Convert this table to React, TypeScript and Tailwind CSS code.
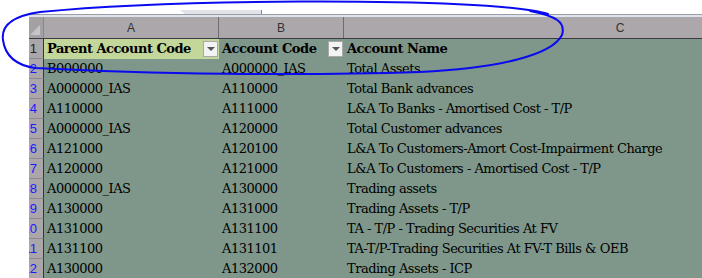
const rows = [
  ["B000000", "A000000_IAS", "Total Assets"],
  ["A000000_IAS", "A110000", "Total Bank advances"],
  ["A110000", "A111000", "L&A To Banks - Amortised Cost - T/P"],
  ["A000000_IAS", "A120000", "Total Customer advances"],
  ["A121000", "A120100", "L&A To Customers-Amort Cost-Impairment Charge"],
  ["A120000", "A121000", "L&A To Customers - Amortised Cost - T/P"],
  ["A000000_IAS", "A130000", "Trading assets"],
  ["A130000", "A131000", "Trading Assets - T/P"],
  ["A131000", "A131100", "TA - T/P - Trading Securities At FV"],
  ["A131100", "A131101", "TA-T/P-Trading Securities At FV-T Bills & OEB"],
  ["A130000", "A132000", "Trading Assets - ICP"],
];

const serif = "font-['DejaVu_Serif',serif] text-[13px] tracking-[-0.5px] text-black";

function FilterButton() {
  return (
    <div className="mr-px flex h-[16px] w-[15px] shrink-0 items-center justify-center border border-[#a9a9a9] bg-[#f3f3f3]">
      <div className="h-0 w-0 border-x-[4px] border-t-[4px] border-x-transparent border-t-[#555]" />
    </div>
  );
}

function RowHeader({ n, blue }: { n: number; blue?: boolean }) {
  return (
    <div
      className={`flex h-[20px] w-[15px] shrink-0 items-center justify-end overflow-hidden border-b border-r border-b-[#8d8a8d] border-r-[#33334d] bg-[#aaa6a9] pr-[6px] font-['Liberation_Sans',sans-serif] text-[13px] ${
        blue ? "text-[#1a1aff]" : "text-[#222]"
      }`}
    >
      <span className="whitespace-nowrap">{n}</span>
    </div>
  );
}

export default function App() {
  return (
    <div className="relative h-[278px] w-[702px] overflow-hidden bg-white">
      <div className="h-[14px] pt-[10px]">
        <div className="ml-[180px] h-[4px] w-[82px] border-r border-[#8a8a8a] bg-[#e2e3e9] [clip-path:polygon(0_0,100%_0,100%_100%,6%_100%)]" />
      </div>
      <div className="ml-[29px] w-[900px]">
        <div className="h-px bg-[#9c9ca4]" />
        <div className="h-[2px] bg-[#dfe3ee]" />
        {/* column headers */}
        <div className="flex h-[22px] border-b border-[#3b3b45] bg-[#aba7aa] font-['Liberation_Sans',sans-serif] text-[12px] text-[#333]">
          <div className="relative h-full w-[15px] shrink-0 border-r border-[#8a878a] bg-[#a4a1a4]">
            <div className="absolute bottom-[3px] right-[3px] h-0 w-0 border-b-[10px] border-l-[10px] border-b-[#c6c4c6] border-l-transparent" />
          </div>
          <div className="flex w-[175px] shrink-0 items-center justify-center border-r border-[#6e6c6e]">A</div>
          <div className="flex w-[125px] shrink-0 items-center justify-center border-r border-[#6e6c6e]">B</div>
          <div className="flex w-[552px] shrink-0 items-center justify-center">C</div>
        </div>
        {/* header row */}
        <div className="flex h-[20px]">
          <RowHeader n={1} />
          <div className="flex w-[175px] shrink-0 items-center justify-between bg-[#c4d79b] pl-[3px]">
            <span className={`${serif} font-bold`}>Parent Account Code</span>
            <FilterButton />
          </div>
          <div className="flex w-[125px] shrink-0 items-center justify-between bg-[#7f978a] pl-[3px]">
            <span className={`${serif} font-bold`}>Account Code</span>
            <FilterButton />
          </div>
          <div className="flex w-[552px] shrink-0 items-center bg-[#7f978a] pl-[3px]">
            <span className={`${serif} font-bold`}>Account Name</span>
          </div>
        </div>
        {rows.map((r, i) => (
          <div key={i} className="flex h-[20px]">
            <RowHeader n={i + 2} blue />
            <div className={`flex w-[175px] shrink-0 items-center bg-[#7f978a] pl-[3px] ${serif}`}>{r[0]}</div>
            <div className={`flex w-[125px] shrink-0 items-center bg-[#7f978a] pl-[3px] ${serif}`}>{r[1]}</div>
            <div className={`flex w-[552px] shrink-0 items-center whitespace-nowrap bg-[#7f978a] pl-[3px] ${serif}`}>{r[2]}</div>
          </div>
        ))}
      </div>
      <svg className="pointer-events-none absolute inset-0" width="702" height="278" viewBox="0 0 702 278" fill="none">
        <path
          d="M548 14 C520 5 420 1 300 1.5 C200 2 100 6 40 12 C12 16 1 26 3 40 C5 55 15 65 35 68 C150 74 300 76 420 72 C500 68 552 55 562 35 C566 22 556 16 530 11"
          stroke="#0a0af0"
          strokeWidth="2"
          strokeLinecap="round"
        />
      </svg>
    </div>
  );
}
